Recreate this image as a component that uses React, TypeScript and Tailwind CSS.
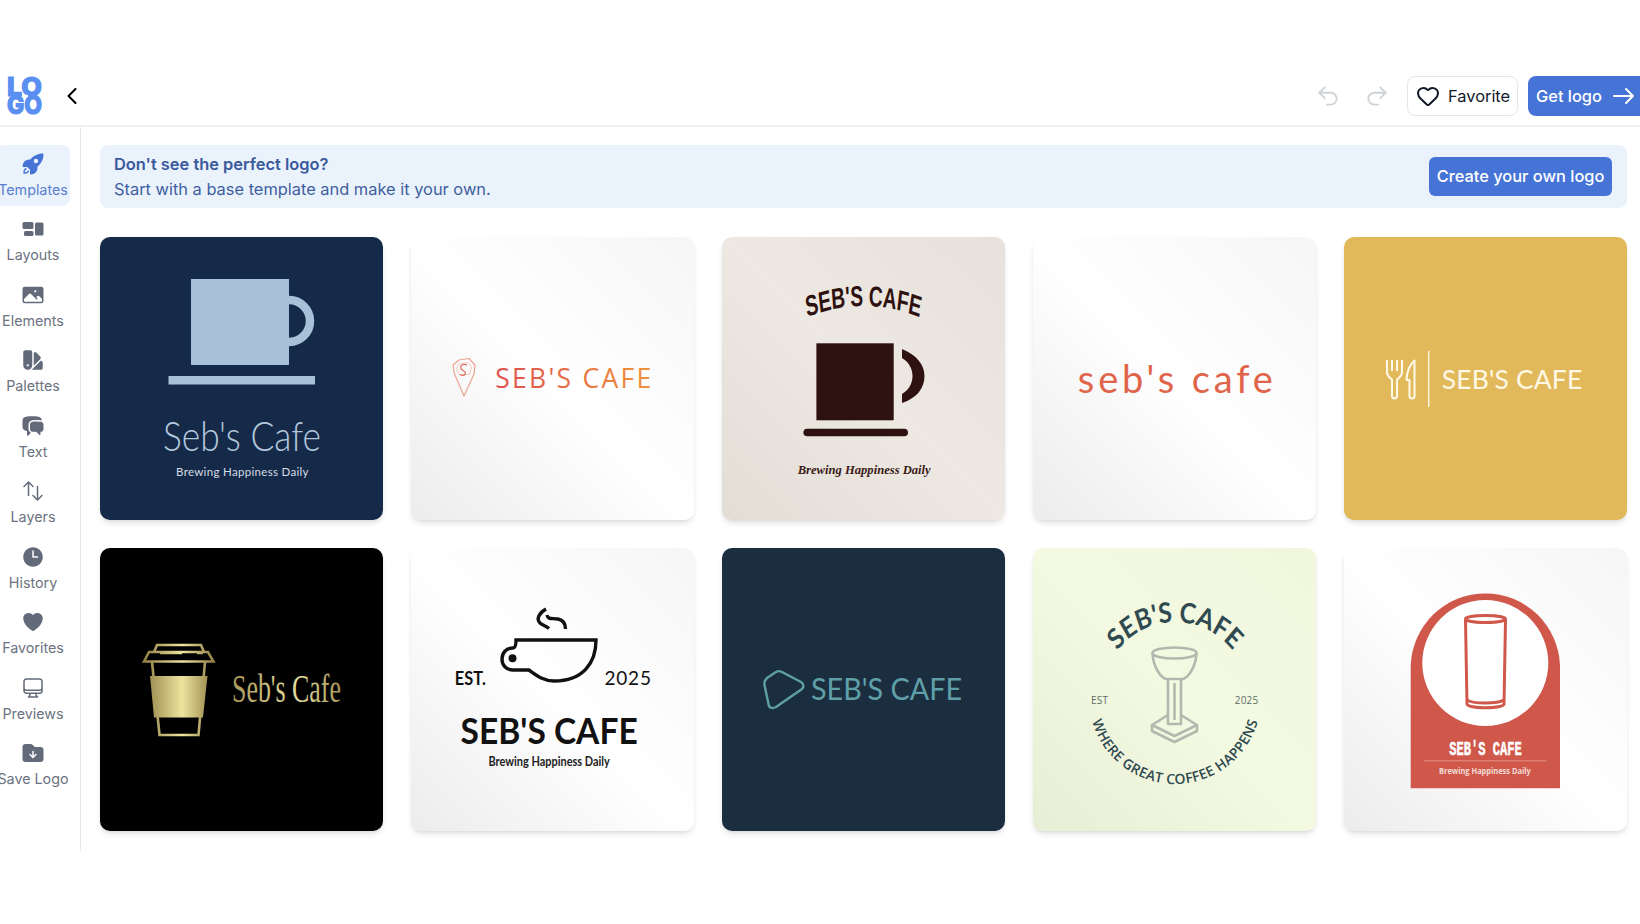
import React from "react";
import { ChevronLeft, Undo2, Redo2, Heart } from "lucide-react";
import {
  HiRocketLaunch, HiPhoto, HiSwatch, HiChatBubbleLeftRight, HiOutlineArrowsUpDown,
  HiClock, HiHeart, HiOutlineComputerDesktop, HiFolderArrowDown,
} from "react-icons/hi2";

const LayoutsIcon = ({ className }: { className?: string }) => (
  <svg viewBox="0 0 24 24" className={className} fill="currentColor">
    <rect x="1.5" y="5" width="11" height="7" rx="1.5" />
    <rect x="14" y="5.5" width="8.5" height="13" rx="1.5" />
    <rect x="3" y="14" width="9.5" height="5" rx="1.5" />
  </svg>
);

const nav = [
  { label: "Templates", Icon: HiRocketLaunch, active: true },
  { label: "Layouts", Icon: LayoutsIcon },
  { label: "Elements", Icon: HiPhoto },
  { label: "Palettes", Icon: HiSwatch },
  { label: "Text", Icon: HiChatBubbleLeftRight },
  { label: "Layers", Icon: HiOutlineArrowsUpDown },
  { label: "History", Icon: HiClock },
  { label: "Favorites", Icon: HiHeart },
  { label: "Previews", Icon: HiOutlineComputerDesktop },
  { label: "Save Logo", Icon: HiFolderArrowDown },
];

const S = ({ children }: { children: React.ReactNode }) => (
  <svg viewBox="0 0 283 283" className="absolute inset-0 h-full w-full">{children}</svg>
);

const Logo1 = () => (
  <S>
    <rect x="91" y="42" width="98" height="86" fill="#a9c0d9" />
    <path d="M189 63 A21 21 0 0 1 189 105" fill="none" stroke="#a9c0d9" strokeWidth="8.5" />
    <rect x="68.5" y="139" width="146.5" height="8.5" fill="#a9c0d9" />
    <text x="63" y="213.5" fontFamily="Lato" fontWeight="300" fontSize="41" fill="#b3c7dd" textLength="158" lengthAdjust="spacingAndGlyphs">Seb's Cafe</text>
    <text x="76" y="239" fontFamily="Lato" fontSize="11.5" fill="#d5dde7" textLength="132.5">Brewing Happiness Daily</text>
  </S>
);

const Logo2 = () => (
  <S>
    <defs>
      <linearGradient id="g2" x1="84" x2="240" y1="0" y2="0" gradientUnits="userSpaceOnUse">
        <stop offset="0" stopColor="#dd5050" />
        <stop offset="1" stopColor="#ef9238" />
      </linearGradient>
    </defs>
    <path d="M48 123 L58 121.5 L64 128 L63 137 L53 159 L43.5 137 L42 128 Z" fill="none" stroke="#eaa592" strokeWidth="1.2" strokeLinejoin="round" />
    <path d="M48 127 L57 125.5 L60.5 130 L59 137 L48.5 138 L45.5 132 Z" fill="none" stroke="#f0bdb0" strokeWidth="0.8" />
    <path d="M56 128 C50 126 47.5 131 52 133.5 C56.5 136 54 140 49 137.5" fill="none" stroke="#d9705f" strokeWidth="1.2" />
    <text x="84.3" y="151.3" fontFamily="Open Sans" fontSize="26.5" fill="url(#g2)" textLength="156">SEB'S CAFE</text>
  </S>
);

const Logo3 = () => (
  <S>
    <g transform="translate(141.5 0) scale(0.66 1) translate(-141.5 0)">
      <path id="a3" d="M30 88 Q141.5 50 253 88" fill="none" />
      <text fontFamily="Liberation Sans" fontWeight="700" fontSize="29" fill="#2e1210" textAnchor="middle">
        <textPath href="#a3" startOffset="50%">SEB'S CAFE</textPath>
      </text>
    </g>
    <rect x="94.4" y="106.3" width="77.3" height="77" fill="#2e1210" />
    <path d="M180 112 C195 118 202.5 128 202.5 139 C202.5 151 195 161 180 166 L180 157 C187 153 190.5 146 190.5 139 C190.5 132 187 125 180 121 Z" fill="#2e1210" />
    <rect x="81.4" y="191.7" width="104.6" height="7.6" rx="3.8" fill="#2e1210" />
    <text x="75.7" y="237" fontFamily="Liberation Serif" fontStyle="italic" fontWeight="700" fontSize="13.5" fill="#3a1a17" textLength="133" lengthAdjust="spacingAndGlyphs">Brewing Happiness Daily</text>
  </S>
);

const Logo4 = () => (
  <S>
    <text x="44.8" y="155.7" fontFamily="Lato" fontSize="38" fill="#e0644a" textLength="195">seb's cafe</text>
  </S>
);

const Logo5 = () => (
  <S>
    <g fill="none" stroke="#fff8e6" strokeWidth="2.1" strokeLinejoin="round">
      <path d="M43 123 V135 C43 139 46 141 48 142.5 V159 a2.5 2.5 0 0 0 5 0 V142.5 C55 141 58 139 58 135 V123 M48 123 V134 M53 123 V134" />
      <path d="M71 123 C66 127 62.5 135 62.5 143 H65.5 V159 a2.5 2.5 0 0 0 5 0 V123" />
    </g>
    <rect x="84" y="114" width="1.4" height="56" fill="#fff8e6" />
    <text x="97.7" y="152.3" fontFamily="Lato" fontWeight="400" fontSize="26.5" fill="#fff8e6" textLength="140.6">SEB'S CAFE</text>
  </S>
);

const Logo6 = () => (
  <S>
    <defs>
      <linearGradient id="g6" x1="43" x2="114" y1="0" y2="0" gradientUnits="userSpaceOnUse">
        <stop offset="0" stopColor="#8f7d42" />
        <stop offset="0.55" stopColor="#ede49f" />
        <stop offset="1" stopColor="#8f7d42" />
      </linearGradient>
      <linearGradient id="g6t" x1="132" x2="241" y1="0" y2="0" gradientUnits="userSpaceOnUse">
        <stop offset="0" stopColor="#a8975a" />
        <stop offset="0.6" stopColor="#e6dd9c" />
        <stop offset="1" stopColor="#a8975a" />
      </linearGradient>
    </defs>
    <g fill="none" stroke="url(#g6)" strokeWidth="2.6">
      <path d="M54 104 L57 97 H101 L104 104" />
      <path d="M44 113.5 L49 104 H108 L113.5 113.5 Z" />
      <path d="M52 114 L59.5 187 H98.5 L105 114" />
      <path d="M60 105 H82 M97 105 H103" />
    </g>
    <path d="M50 128 H107.5 L103 169.5 H54 Z" fill="url(#g6)" />
    <text x="132" y="154.3" fontFamily="Liberation Serif" fontSize="39" fill="url(#g6t)" textLength="109" lengthAdjust="spacingAndGlyphs">Seb's Cafe</text>
  </S>
);

const Logo7 = () => (
  <S>
    <g fill="none" stroke="#111" strokeWidth="3.4">
      <path d="M105 92 H185 C185 115 172 133 143 133 C132 133 125 127 118 122 H102 C95 122 91 117 91 111 C91 105 95 100 102 100 C104 100 105 98 105 92 Z" />
      <path d="M135 61 C128 65 125 71 129 75 C131 77 135 78 138 80.5" />
      <path d="M136 67 C137 72 141 70 147 71 C152 72 154.5 76 154.5 81" />
    </g>
    <circle cx="101.5" cy="110.3" r="4" fill="#111" />
    <text x="43.8" y="137" fontFamily="Lato" fontWeight="700" fontSize="19" fill="#111" textLength="31" lengthAdjust="spacingAndGlyphs">EST.</text>
    <text x="193.4" y="137" fontFamily="Lato" fontWeight="400" fontSize="19" fill="#111" textLength="46.6">2025</text>
    <text x="49.5" y="196.3" fontFamily="Lato" fontWeight="700" fontSize="37" fill="#111" textLength="177.2" lengthAdjust="spacingAndGlyphs">SEB'S CAFE</text>
    <text x="77.4" y="218" fontFamily="Lato" fontWeight="700" fontSize="13" fill="#222" textLength="121.4" lengthAdjust="spacingAndGlyphs">Brewing Happiness Daily</text>
  </S>
);

const Logo8 = () => (
  <S>
    <path d="M60 124 L79 134 C82 136 82 139 80 141 L54 159 C50 161 47 160 46.5 156 L42.5 137 C42 134 43 132 45 130 L54 124 C56 122.5 58 123 60 124 Z" fill="none" stroke="#5f9fa8" strokeWidth="2.4" strokeLinejoin="round" />
    <text x="89" y="152.3" fontFamily="Lato" fontWeight="400" fontSize="30.5" fill="#5f9fa8" textLength="151" lengthAdjust="spacingAndGlyphs">SEB'S CAFE</text>
  </S>
);

const Logo9 = () => (
  <S>
    <g transform="translate(142 0) scale(0.88 1) translate(-142 0)">
      <path id="a9t" d="M60 146 A82 72 0 0 1 224 146" fill="none" />
      <text fontFamily="Lato" fontWeight="700" fontSize="28" fill="#2f4a50" textAnchor="middle">
        <textPath href="#a9t" startOffset="50%">SEB'S CAFE</textPath>
      </text>
    </g>
    <path id="a9b" d="M56 150 A86 86 0 0 0 228 150" fill="none" />
    <text fontFamily="Open Sans" fontWeight="600" fontSize="14" letterSpacing="0.2" fill="#2f4a50" textAnchor="middle">
      <textPath href="#a9b" startOffset="50%">WHERE GREAT COFFEE HAPPENS</textPath>
    </text>
    <g fill="none" stroke="#b1b9ae" strokeWidth="2.6" strokeLinejoin="round">
      <ellipse cx="141.5" cy="105" rx="22" ry="5.5" />
      <path d="M119.5 105 C120 118 127 129 133 131 H150 C156 129 163 118 163.5 105" />
      <path d="M135 131 V176 H148 V131 M141.5 135 V172" />
      <path d="M135 167 L119 177 L141.5 188 L164 177 L148 167" />
      <path d="M119 177 V183 L141.5 194 L164 183 V177" />
    </g>
    <text x="58" y="156" fontFamily="Open Sans" fontSize="10" fill="#5c6d66" textLength="17">EST</text>
    <text x="201.7" y="156" fontFamily="Open Sans" fontSize="10" fill="#5c6d66" textLength="23.5">2025</text>
  </S>
);

const Logo10 = () => (
  <S>
    <path d="M66.7 240.3 V117.4 A74.7 74.7 0 0 1 216 117.4 V240.3 Z" fill="#cf584b" />
    <circle cx="141.3" cy="115" r="63" fill="#fff" />
    <g fill="none" stroke="#cf584b" strokeWidth="3">
      <path d="M121.5 72 L123 156 C124 161 159 161 160 156 L161.5 72" />
      <ellipse cx="141.5" cy="71" rx="20" ry="3.5" />
      <path d="M123.5 152 C128 156 154 156 159.5 152" />
    </g>
    <text x="105.3" y="206.5" fontFamily="Liberation Mono" fontWeight="700" fontSize="21" fill="#fff" stroke="#fff" strokeWidth="0.5" textLength="72.4" lengthAdjust="spacingAndGlyphs">SEB'S CAFE</text>
    <rect x="80" y="212.4" width="122.7" height="0.8" fill="#e79a8f" />
    <text x="95" y="226" fontFamily="Open Sans" fontWeight="700" fontSize="8.5" fill="#f6dcd8" textLength="91.7" lengthAdjust="spacingAndGlyphs">Brewing Happiness Daily</text>
  </S>
);

const Whitebg = "bg-linear-to-tr from-[#ececec] via-white to-[#f6f6f6]";
const cards: { cls: string; L: React.FC }[] = [
  { cls: "bg-[#152a48]", L: Logo1 },
  { cls: Whitebg, L: Logo2 },
  { cls: "bg-linear-to-tr from-[#e2ded6] via-[#ede8e2] to-[#e6e2db]", L: Logo3 },
  { cls: Whitebg, L: Logo4 },
  { cls: "bg-[#e2b95a]", L: Logo5 },
  { cls: "bg-black", L: Logo6 },
  { cls: Whitebg, L: Logo7 },
  { cls: "bg-[#1b2e3f]", L: Logo8 },
  { cls: "bg-linear-to-tr from-[#e8eed6] via-[#f4fae2] to-[#f1f7dd]", L: Logo9 },
  { cls: Whitebg, L: Logo10 },
];

export default function App() {
  return (
    <div className="h-[924px] w-[1640px] overflow-hidden bg-white pt-[76px] font-['Inter',sans-serif] text-[#111827]">
      <header className="flex h-[51px] items-start border-b-2 border-[#f0f1f3]">
        <svg viewBox="0 0 38 42" className="ml-[6px] h-[42px] w-[38px]">
          <text x="1" y="20" fontFamily="Inter" fontWeight="800" fontSize="26" fill="#5a8ff2" stroke="#5a8ff2" strokeWidth="1.2" textLength="35" lengthAdjust="spacingAndGlyphs">LO</text>
          <text x="1" y="38" fontFamily="Inter" fontWeight="800" fontSize="26" fill="#5a8ff2" stroke="#5a8ff2" strokeWidth="1.2" textLength="35" lengthAdjust="spacingAndGlyphs">GO</text>
          <path d="M16 20 h6 m-2 -1.5 l2 1.5 l-2 1.5" fill="none" stroke="#fff" strokeWidth="1" />
        </svg>
        <button className="ml-[14px] mt-[6px] flex h-[28px] w-[28px] items-center justify-center text-black">
          <ChevronLeft size={30} strokeWidth={1.8} />
        </button>
        <div className="ml-auto flex items-center">
          <Undo2 size={26} strokeWidth={1.7} className="text-[#cfd3d8]" />
          <Redo2 size={26} strokeWidth={1.7} className="ml-[23px] text-[#cfd3d8]" />
          <button className="ml-[17px] flex h-[40px] w-[111px] items-center gap-[8px] rounded-lg border border-[#e5e7eb] pl-[8px] text-[16.4px]">
            <Heart size={24} strokeWidth={2} />
            Favorite
          </button>
          <button className="ml-[10px] flex h-[40px] w-[112px] items-center gap-[11px] rounded-l-lg bg-[#4673d6] pl-[8px] text-[16.4px] font-medium text-white">
            Get logo
            <svg viewBox="0 0 22 18" className="h-[18px] w-[22px] shrink-0" fill="none" stroke="currentColor" strokeWidth="2" strokeLinecap="round" strokeLinejoin="round">
              <path d="M1 9 H20 M13 2 L20 9 L13 16" />
            </svg>
          </button>
        </div>
      </header>
      <div className="flex">
        <aside className="flex h-[724px] w-[81px] shrink-0 flex-col items-start gap-[4.5px] border-r border-[#e5e7eb] pt-[18px]">
          {nav.map(({ label, Icon, active }) => (
            <div
              key={label}
              className={`-ml-[4px] flex h-[61px] w-[74px] flex-col items-center justify-center gap-[4px] rounded-lg text-[14.3px] ${active ? "bg-[#eaf2fc] text-[#5a7fd0]" : "text-[#6b7280]"}`}
            >
              <Icon className={`h-[24px] w-[24px] ${active ? "text-[#4673d6]" : "text-[#636b7a]"}`} />
              <span className="whitespace-nowrap leading-[20px]">{label}</span>
            </div>
          ))}
        </aside>
        <main className="flex-1 pl-[19px] pr-[13px] pt-[18px]">
          <div className="flex h-[63px] items-center justify-between rounded-lg bg-[#eaf2fc] pl-[14px] pr-[15px]">
            <div className="text-[16.4px] leading-[25px] text-[#3f5f9f]">
              <div className="font-semibold text-[#3a5a9c]">Don't see the perfect logo?</div>
              <div>Start with a base template and make it your own.</div>
            </div>
            <button className="flex h-[39px] w-[183px] items-center justify-center rounded-md bg-[#4673d6] text-[16.4px] font-medium text-white">
              Create your own logo
            </button>
          </div>
          <div className="mt-[29px] grid grid-cols-5 gap-x-[28px] gap-y-[28px]">
            {cards.map(({ cls, L }, i) => (
              <div key={i} className={`relative aspect-square overflow-hidden rounded-[10px] shadow-md ${cls}`}>
                <L />
              </div>
            ))}
          </div>
        </main>
      </div>
    </div>
  );
}
